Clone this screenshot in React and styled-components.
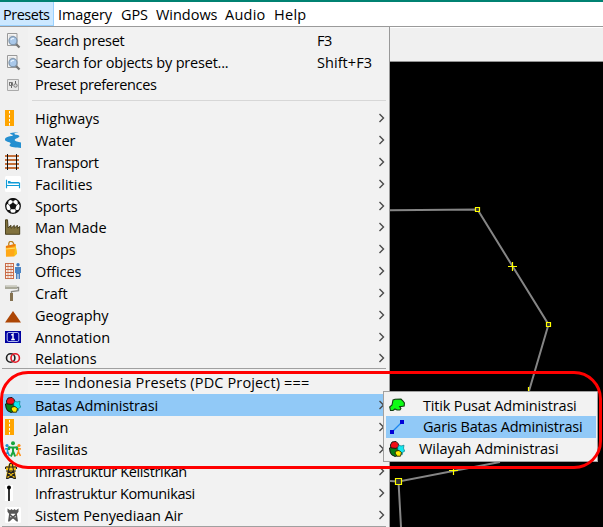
import React from "react";
import styled, { createGlobalStyle } from "styled-components";

const Global = createGlobalStyle`
  * { box-sizing: border-box; }
  body { margin: 0; overflow: hidden; background: #000; }
`;

const Window = styled.main`
  position: relative;
  width: 603px;
  height: 527px;
  overflow: hidden;
  display: flex;
  flex-direction: column;
  background: #000;
  color: #000;
  font: 14.5px/22px "Open Sans", "Noto Sans", sans-serif;
  white-space: pre;
`;

const MenuBar = styled.nav`
  height: 27px;
  flex: none;
  display: flex;
  background: #fff;
  border-top: 2px solid #008272;
  border-bottom: 1px solid #9a9a9a;
`;

const MenuTitle = styled.div`
  width: ${(p) => p.$width}px;
  padding-left: ${(p) => (p.$active ? 3 : 4)}px;
  line-height: 25px;
  letter-spacing: ${(p) => p.$track || 0}px;
  background: ${(p) => (p.$active ? "#cce8ff" : "transparent")};
  box-shadow: ${(p) => (p.$active ? "inset -1px 0 #99d1ff, inset 0 -1px #99d1ff" : "none")};
`;

const Body = styled.div`
  flex: 1;
  min-height: 0;
  display: flex;
`;

const Menu = styled.div`
  width: 390px;
  padding-top: 3px;
  flex: none;
  background: linear-gradient(90deg, #f0f0f0 28px, #f2f2f2 28px);
  border-right: 1px solid #999;
`;

const Row = styled.div`
  display: flex;
  align-items: center;
  height: ${(p) => p.$height || 22}px;
  padding-left: 5px;
  background: ${(p) => (p.$selected ? "linear-gradient(90deg, transparent 2px, #91c9f7 2px, #91c9f7 386px, transparent 386px)" : "transparent")};
`;

const IconSlot = styled.span`
  width: 30px;
  height: 16px;
  flex: none;
`;

const Label = styled.span`
  flex: 1;
  padding-top: ${(p) => (p.$low ? 2 : 0)}px;
  line-height: 22px;
  letter-spacing: ${(p) => p.$track || 0}px;
`;

const Shortcut = styled.span`
  width: 72px;
  letter-spacing: ${(p) => p.$track || 0}px;
`;

const ArrowSlot = styled.span`
  width: 10px;
  height: 10px;
  display: flex;
`;

const Separator = styled.div`
  height: ${(p) => p.$height}px;
  padding: ${(p) => p.$top}px 3px 0 ${(p) => p.$left}px;
  &::after {
    content: "";
    display: block;
    height: 1px;
    background: ${(p) => p.$color};
  }
`;

const Workspace = styled.div`
  flex: 1;
  display: flex;
  flex-direction: column;
`;

const ToolStrip = styled.div`
  height: 35px;
  background: #f0f0f0;
  border-top: 1px solid #fff;
  border-bottom: 1px solid #929292;
`;

const MapCanvas = styled.div`
  flex: 1;
  background: #000;
  svg { display: block; }
`;

const SubMenu = styled.div`
  position: absolute;
  left: 383px;
  top: 391px;
  width: 215px;
  height: 71px;
  padding: 2px 1px;
  background: #f2f2f2;
  border: 1px solid #a0a0a0;
`;

const SubRow = styled.div`
  display: flex;
  align-items: center;
  height: 22px;
  margin-left: 1px;
  width: 210px;
  padding-left: 3px;
  background: ${(p) => (p.$selected ? "#91c9f7" : "transparent")};
`;

const SubLabel = styled.span`
  padding-left: ${(p) => p.$indent}px;
  padding-top: ${(p) => (p.$low ? 2 : 0)}px;
  letter-spacing: ${(p) => p.$track}px;
`;

const Callout = styled.div`
  position: absolute;
  left: 0;
  top: 370.5px;
  width: 602px;
  height: 98px;
  border: 3px solid #ff0000;
  border-radius: 28px;
  pointer-events: none;
`;

const Svg = styled.svg`
  display: block;
  width: 16px;
  height: 16px;
`;

const search = (
  <>
    <path d="M2.5.5h9.5v12h-9.5z" fill="#f3f3f3" stroke="#999" />
    <path d="M4 3h5M4 5h3M4 8h2" stroke="#ccc" />
    <path d="m10.5 10.5 4 4" stroke="#777" strokeWidth="2.3" />
    <circle cx="8" cy="7.7" r="4" fill="#a9c8ea" stroke="#8097ae" strokeWidth="1.3" />
    <path d="M5.9 6.8Q7 5 9 5.6" fill="none" stroke="#e7f3ff" strokeWidth="1.3" />
  </>
);

const road = (
  <>
    <path d="M0 0h9v16H0z" fill="#ffa500" />
    <path d="M4.5 1v15" stroke="#fff" strokeWidth="1" strokeDasharray="2.5 1.5" />
  </>
);

const regions = (
  <>
    <path d="M3 5 .5 7l.6 4 1.4 2.7 4 2 3-2-1-7z" fill="#087f18" stroke="#111" />
    <path d="M3 1 7 .4l2 2 1 3-3 2-5-.5L1.4 4z" fill="#f20d17" stroke="#111" strokeWidth=".9" />
    <path d="m10 4 2 1 3-.8-.5 3 1.2 3-2 1-.5 2.5-4-2-.5-5z" fill="#14e8f0" stroke="#087e87" strokeWidth=".7" />
    <path d="m7 10 3-.5 2.5 2-1 3.7H8L6 12z" fill="#ffec00" stroke="#272300" strokeWidth=".9" />
  </>
);

const icons = {
  search,
  road,
  regions,
  preferences: (
    <>
      <path d="M2.5 2.5h11v11h-11z" fill="#e8e8e8" stroke="#aaa" />
      <path d="M4.5 5v3M6.5 5v6M10.5 4v4" stroke="#666" strokeWidth="1" />
      <path d="M4.5 5.5h3v3h-3z" fill="none" stroke="#777" />
      <circle cx="10.5" cy="8.5" r="1.7" fill="#ddd" stroke="#777" />
    </>
  ),
  water: (
    <path d="M13.5 0 7 .7C4.5 1 4.7 2.1 6.5 2.5c2 .5 1.7 1.2-.3 1.6C2 4.7-.3 6 0 7.7c.4 1.9 4.3 2.1 5.5 3.2.7.9-1.5 1.6-.8 2.8.9 1.5 6.8 1.8 11.3 2.3v-5.4c-2.6-.6-6.3-1.3-6.3-2.6 0-1.5 5-2.4 4.7-3.9-.2-1.2-5.1-1.2-5.1-2.3C9.3 1 12 .7 13.5 0Z" fill="#258fd0" />
  ),
  rails: (
    <>
      <path d="M0 2h14M0 6h14M0 10h14M0 14h14" stroke="#c46f39" strokeWidth="2" />
      <path d="M2.5 0v16M11.5 0v16" stroke="#111" strokeWidth="1" />
    </>
  ),
  bed: (
    <>
      <rect width="16" height="16" rx="1.5" fill="#fff" />
      <path d="M1.5 3.8v8.4M14.5 6.5v5.7M1.5 9.5h13" fill="none" stroke="#109bd7" strokeWidth="1.2" />
      <path d="M3 5h2l1 1h8v1.5H3z" fill="#109bd7" />
    </>
  ),
  ball: (
    <>
      <circle cx="8" cy="8" r="7.3" fill="#fff" stroke="#111" strokeWidth="1.3" />
      <path d="m8 4.4 3.6 2.6-1.3 4.2H5.7L4.4 7zM4.2 1.5 8 3l3.8-1.5L9 .3H7zM.5 7.5 3.2 5.5 3.6 2 1 4.5zM15.5 7.5l-2.7-2L12.4 2 15 4.5zM1.8 11.8l3.5.5 1 3.2-2.8-1.2zM14.2 11.8l-3.5.5-1 3.2 2.8-1.2z" fill="#111" />
      <path d="M8 2v3M2.5 5.5l2.5 2M13.5 5.5l-2.5 2M5.8 10.8l-1.3 2M10.2 10.8l1.3 2" stroke="#111" strokeWidth=".7" />
    </>
  ),
  factory: (
    <path d="M.5 15.3V.8h2l.6 8L6 6.3v3l3.3-3v3l3-3 .1 3 2.3-1.8v7.8z" fill="#80713d" stroke="#3e3514" strokeWidth=".9" />
  ),
  bag: (
    <>
      <path d="M4 5C2.5-.5 8-1.5 9 4" fill="none" stroke="#b88225" strokeWidth="1.3" />
      <path d="m.8 5 9.6-2 1.6 9.7-3 2.7-8 .4z" fill="#ffa817" />
      <path d="m1 5 9.3-2 .3 2L1 7z" fill="#eb7b0d" />
      <path d="m1 8 10-1" stroke="#ffe067" strokeWidth="1.2" />
      <path d="m9 15.4 3-2.7L10.4 3z" fill="#f6c51a" />
    </>
  ),
  office: (
    <>
      <path d="M0 0h9v16H0z" fill="#f7eee8" />
      <path d="M.5 0v16M8.5 0v16M0 .5h9M0 3.5h9M0 6.5h9M0 9.5h9M0 12.5h9M0 15.5h9M3 0v16M6 0v16" stroke="#c96c48" strokeWidth="1" />
      <path d="M1 2h7M1 5h7M1 8h7M1 11h7M1 14h7" stroke="#f7eee8" strokeWidth=".8" />
      <circle cx="13" cy="1.8" r="1.7" fill="#3976be" />
      <path d="M10 4h6v6h-1v6h-1.5v-5h-1v5H11v-6h-1z" fill="#4a83c3" />
    </>
  ),
  roller: (
    <>
      <path d="M0 .5h12v3.5H0z" fill="#a9a99a" />
      <path d="M.5 1.2H12" stroke="#dcdcd3" />
      <path d="M12 2.5h1.5v3.2L6.5 6.5v3" fill="none" stroke="#8a8a85" strokeWidth="1.4" />
      <path d="M5 8h3v8H5z" fill="#84714f" />
    </>
  ),
  mountain: <path d="m8 4 8 11.5H0z" fill="#ad4605" />,
  annotation: (
    <>
      <path d="M0 2h16v12H0z" fill="#0000a0" />
      <rect x="2.2" y="3.5" width="11.6" height="9" rx="1.5" fill="none" stroke="#dceaff" strokeWidth=".8" />
      <path d="m6.3 6.2 1.7-1v5M6.2 10.5h3.6" fill="none" stroke="#fff" strokeWidth="1.4" />
    </>
  ),
  relations: (
    <>
      <circle cx="5.7" cy="8" r="4.2" fill="none" stroke="#222" strokeWidth="1.6" />
      <circle cx="10.2" cy="8" r="4.2" fill="none" stroke="#e51624" strokeWidth="1.6" />
    </>
  ),
  people: (
    <>
      <circle cx="2" cy="4.5" r="1.6" fill="#1c91d0" />
      <path d="m0 8 2.5-.5 2.5-2M2.5 7v4L.5 15M2.5 10.5l2 4.5" fill="none" stroke="#1c91d0" strokeWidth="1.6" />
      <circle cx="14" cy="4.5" r="1.6" fill="#ff8e17" />
      <path d="m16 8-2.5-.5-2.5-2M13.5 7v4l2 4M13.5 10.5l-2 4.5" fill="none" stroke="#ff8e17" strokeWidth="1.6" />
      <circle cx="8" cy="2.2" r="2" fill="#19a53c" />
      <path d="M4 9V6.5h8V9M8 6v5l-2.2 4.5M8 10l2.2 5.5" fill="none" stroke="#19a53c" strokeWidth="2" />
    </>
  ),
  pylon: (
    <>
      <path d="m4 .5h4L9 3h2v4h-1l1 8H1l1-8H1V3h2z" fill="#f4c114" />
      <path d="M4.7.5h2.6L8 5l2.5 11M4.7.5 4 5 1.5 16M.5 4h11M.5 4v2M11.5 4v2M1 8h10M3 8l6 4-7 4M9 8l-6 4 7 4" fill="none" stroke="#222" strokeWidth="1.1" />
    </>
  ),
  mast: (
    <>
      <path d="M0 0h8v16H0z" fill="#fff" />
      <path d="M4 2v14" stroke="#000" strokeWidth="1.6" />
      <circle cx="4" cy="2.5" r="2" fill="#000" />
    </>
  ),
  tower: (
    <>
      <rect width="16" height="16" rx="1.5" fill="#fff" />
      <path d="M2.5 1.5v3.2l1.5 2h8l1.5-2V1.5L11 3.2 9.5 2 8 3.2 6.5 2 5 3.2z" fill="#565656" />
      <path d="M5 6 3.8 14.5M11 6l1.2 8.5M5 7.5l6.5 6M11 7.5l-6.5 6M4.5 11h7" fill="none" stroke="#565656" strokeWidth="1.6" />
    </>
  ),
  area: (
    <path d="m4 3 2-.7L12 2l2 2 1.4 2-.2 3-3 .5h-1.5l1.2 2-1 1.5H8l-2-1-2 1.5H1.5L.7 10 3 8z" fill="#0dfc15" stroke="#103c12" strokeWidth="1.1" />
  ),
  line: (
    <>
      <path d="M3 13 13 3" stroke="#1c86f0" strokeWidth="1.3" />
      <path d="M1 11h4v4H1zM11 1h4v4h-4z" fill="#0000d8" />
    </>
  ),
};

const Icon = ({ name }) => <Svg viewBox="0 0 16 16">{icons[name]}</Svg>;

const Arrow = () => (
  <ArrowSlot>
    <svg width="8" height="10" viewBox="0 0 8 10">
      <path d="m.5 1 4 4-4 4" fill="none" stroke="#4a4a4a" strokeWidth="1.4" />
    </svg>
  </ArrowSlot>
);

const Item = ({ icon, label, track, shortcut, keyTrack, arrow, selected, height }) => (
  <Row $selected={selected} $height={height}>
    <IconSlot>{icon && <Icon name={icon} />}</IconSlot>
    <Label $track={track} $low={arrow}>{label}</Label>
    {shortcut && <Shortcut $track={keyTrack}>{shortcut}</Shortcut>}
    {arrow && <Arrow />}
  </Row>
);

const titles = [
  ["Presets", 54, -0.49, true],
  ["Imagery", 63, -0.11],
  ["GPS", 35, -0.07],
  ["Windows", 69, -0.03],
  ["Audio", 49, 0.24],
  ["Help", 50, 0.28],
];

const categories = [
  ["road", "Highways", -0.01],
  ["water", "Water", -0.04],
  ["rails", "Transport", -0.33],
  ["bed", "Facilities", 0.02],
  ["ball", "Sports", -0.17, 21],
  ["factory", "Man Made", -0.05],
  ["bag", "Shops", -0.17],
  ["office", "Offices", -0.03],
  ["roller", "Craft", -0.13],
  ["mountain", "Geography", -0.09],
  ["annotation", "Annotation", -0.03, 21],
  ["relations", "Relations", -0.07, 21],
];

const indonesia = [
  ["regions", "Batas Administrasi", -0.15, true],
  ["road", "Jalan", 0.19],
  ["people", "Fasilitas", -0.12],
  ["pylon", "Infrastruktur Kelistrikan", -0.35],
  ["mast", "Infrastruktur Komunikasi", -0.37],
  ["tower", "Sistem Penyediaan Air", -0.11],
];

const boundaries = [
  ["area", "Titik Pusat Administrasi", -0.17, 18, false, true],
  ["line", "Garis Batas Administrasi", -0.21, 18, true],
  ["regions", "Wilayah Administrasi", -0.08, 14],
];

export default function App() {
  return (
    <Window>
      <Global />
      <MenuBar>
        {titles.map(([label, width, track, active]) => (
          <MenuTitle key={label} $width={width} $track={track} $active={active}>
            {label}
          </MenuTitle>
        ))}
      </MenuBar>
      <Body>
        <Menu>
          <Item icon="search" label="Search preset" track={-0.26} shortcut="F3" keyTrack={-0.39} />
          <Item icon="search" label="Search for objects by preset..." track={-0.2} shortcut="Shift+F3" keyTrack={0.05} />
          <Item icon="preferences" label="Preset preferences" track={-0.34} />
          <Separator $height={11} $top={4} $left={32} $color="#d7d7d7" />
          {categories.map(([icon, label, track, height]) => (
            <Item key={label} icon={icon} label={label} track={track} height={height} arrow />
          ))}
          <Separator $height={4} $top={0} $left={2} $color="#a0a0a0" />
          <Item label="=== Indonesia Presets (PDC Project) ===" track={0.14} />
          {indonesia.map(([icon, label, track, selected]) => (
            <Item key={label} icon={icon} label={label} track={track} selected={selected} arrow />
          ))}
          <Separator $height={1} $top={0} $left={2} $color="#a0a0a0" />
        </Menu>
        <Workspace>
          <ToolStrip />
          <MapCanvas>
            <svg width="213" height="465" viewBox="390 62 213 465">
              <g fill="none" stroke="#858585" strokeWidth="2">
                <path d="M390 210.3 477.5 209.5 548.5 324.5 529 391" />
                <path d="M500 462 398.5 481.5 401 527M398 481.5 390 481" />
              </g>
              <g fill="#333" stroke="#ff0" strokeWidth="1.2">
                <path d="M475.5 207.5h4v4h-4zM546.5 322.5h4v4h-4zM395.5 478.5h6v6h-6z" />
                <path d="M508 266.5h9M512.5 262v9M449 470.5h9M453.5 466v9M524 391.5h9M528.5 387v9" />
              </g>
            </svg>
          </MapCanvas>
        </Workspace>
      </Body>
      <SubMenu>
        {boundaries.map(([icon, label, track, indent, selected, low]) => (
          <SubRow key={label} $selected={selected}>
            <Icon name={icon} />
            <SubLabel $indent={indent} $track={track} $low={low}>{label}</SubLabel>
          </SubRow>
        ))}
      </SubMenu>
      <Callout />
    </Window>
  );
}
